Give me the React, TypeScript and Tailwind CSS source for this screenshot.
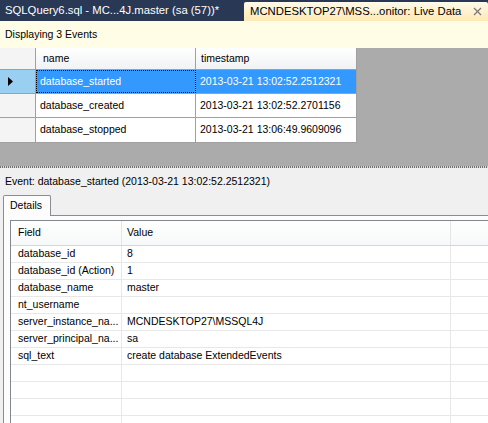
import React from 'react';

const events = [
  { name: 'database_started', ts: '2013-03-21 13:02:52.2512321' },
  { name: 'database_created', ts: '2013-03-21 13:02:52.2701156' },
  { name: 'database_stopped', ts: '2013-03-21 13:06:49.9609096' },
];

const fields: [string, string][] = [
  ['database_id', '8'],
  ['database_id (Action)', '1'],
  ['database_name', 'master'],
  ['nt_username', ''],
  ['server_instance_na...', 'MCNDESKTOP27\\MSSQL4J'],
  ['server_principal_na...', 'sa'],
  ['sql_text', 'create database ExtendedEvents'],
  ['', ''],
  ['', ''],
  ['', ''],
  ['', ''],
];

const App: React.FC = () => {
  return (
    <div
      className="w-[488px] h-[423px] overflow-hidden bg-[#f0f0f0] text-black flex flex-col"
      style={{ fontFamily: '"Liberation Sans", Arial, sans-serif' }}
    >
      {/* document tabs */}
      <div className="h-[21px] bg-[#293955] flex shrink-0">
        <div className="w-[244px] pl-[5px] flex items-center text-[11.3px] text-white whitespace-nowrap">
          SQLQuery6.sql - MC...4J.master (sa (57))*
        </div>
        <div className="flex-1 mt-[2px] rounded-t-[2px] bg-gradient-to-b from-[#fffaeb] to-[#ffe9b3] pl-[6px] pr-[4px] flex items-center text-[11.3px] whitespace-nowrap">
          <span className="flex-1">MCNDESKTOP27\MSS...onitor: Live Data</span>
          <svg width="9" height="9" viewBox="0 0 9 9" className="mr-[2px]">
            <path d="M1 1 L8 8 M8 1 L1 8" stroke="#7a7a7a" strokeWidth="1.3" />
          </svg>
        </div>
      </div>

      {/* info bar */}
      <div className="h-[27px] shrink-0 bg-[#fffde6] px-[5px] flex items-center text-[10.5px]">
        Displaying 3 Events
      </div>

      {/* events grid */}
      <div className="h-[118px] shrink-0 bg-[#ababab]">
        <div className="w-[357px] bg-white border-r border-b border-[#a0a0a0] text-[10.5px]">
          <div className="flex h-[22px] bg-gradient-to-b from-white to-[#f1f2f4] border-b border-[#a0a0a0]">
            <div className="w-[36px] border-r border-[#a0a0a0] bg-[#f4f4f4]" />
            <div className="w-[160px] border-r border-[#a0a0a0] pl-[7px] flex items-center">name</div>
            <div className="flex-1 pl-[5px] flex items-center">timestamp</div>
          </div>
          {events.map((e, i) => {
            const sel = i === 0;
            return (
              <div key={e.name} className="flex h-[24px] border-b border-[#a0a0a0] last:border-b-0">
                <div
                  className={`w-[36px] border-r border-[#a0a0a0] flex items-center pl-[8px] ${
                    sel ? 'bg-[#99cff0]' : 'bg-[#f4f4f4]'
                  }`}
                >
                  {sel && (
                    <svg width="5" height="9" viewBox="0 0 5 9">
                      <path d="M0 0 L5 4.5 L0 9 Z" fill="#000" />
                    </svg>
                  )}
                </div>
                <div
                  className={`w-[160px] border-r border-[#a0a0a0] pl-[4px] flex items-center ${
                    sel ? 'bg-[#3399ff] text-white outline outline-1 outline-dotted outline-black -outline-offset-1' : ''
                  }`}
                >
                  {e.name}
                </div>
                <div className={`flex-1 pl-[4px] flex items-center ${sel ? 'bg-[#3399ff] text-white' : ''}`}>
                  {e.ts}
                </div>
              </div>
            );
          })}
        </div>
      </div>

      {/* splitter */}
      <div className="h-[2px] shrink-0 bg-[repeating-linear-gradient(90deg,#707070_0_1px,#d8d8d8_1px_2px)]" />

      {/* event details */}
      <div className="flex-1 flex flex-col">
        <div className="h-[26px] pl-[5px] flex items-center text-[10.5px] pt-[2px]">
          Event: database_started (2013-03-21 13:02:52.2512321)
        </div>
        <div className="pl-[3px] flex h-[21px] mt-[1px]">
          <div className="w-[48px] bg-[#fcfcfc] border border-b-0 border-[#898c95] rounded-t-[2px] flex items-center pl-[6px] text-[10.5px] relative z-10">
            Details
          </div>
        </div>
        <div className="flex-1 ml-[3px] border-l border-t border-[#898c95] bg-[#fcfcfc] pl-[6px] pt-[4px] -mt-[1px]">
          <div className="h-full bg-white border-l border-t border-[#828790] text-[10.5px]">
            <div className="flex h-[25px] border-b border-[#d5d5d5] bg-gradient-to-b from-white to-[#f7f8f9]">
              <div className="w-[111px] border-r border-[#e5e5e5] pl-[7px] flex items-center">Field</div>
              <div className="w-[329px] border-r border-[#e5e5e5] pl-[5px] flex items-center">Value</div>
              <div className="flex-1" />
            </div>
            {fields.map(([f, v], i) => (
              <div key={i} className="flex h-[17px] border-b border-[#e8e8e8]">
                <div className="w-[111px] border-r border-[#e8e8e8] pl-[7px] flex items-center whitespace-nowrap overflow-hidden">
                  {f}
                </div>
                <div className="w-[329px] border-r border-[#e8e8e8] pl-[5px] flex items-center whitespace-nowrap">
                  {v}
                </div>
                <div className="flex-1" />
              </div>
            ))}
          </div>
        </div>
      </div>
    </div>
  );
};

export default App;
